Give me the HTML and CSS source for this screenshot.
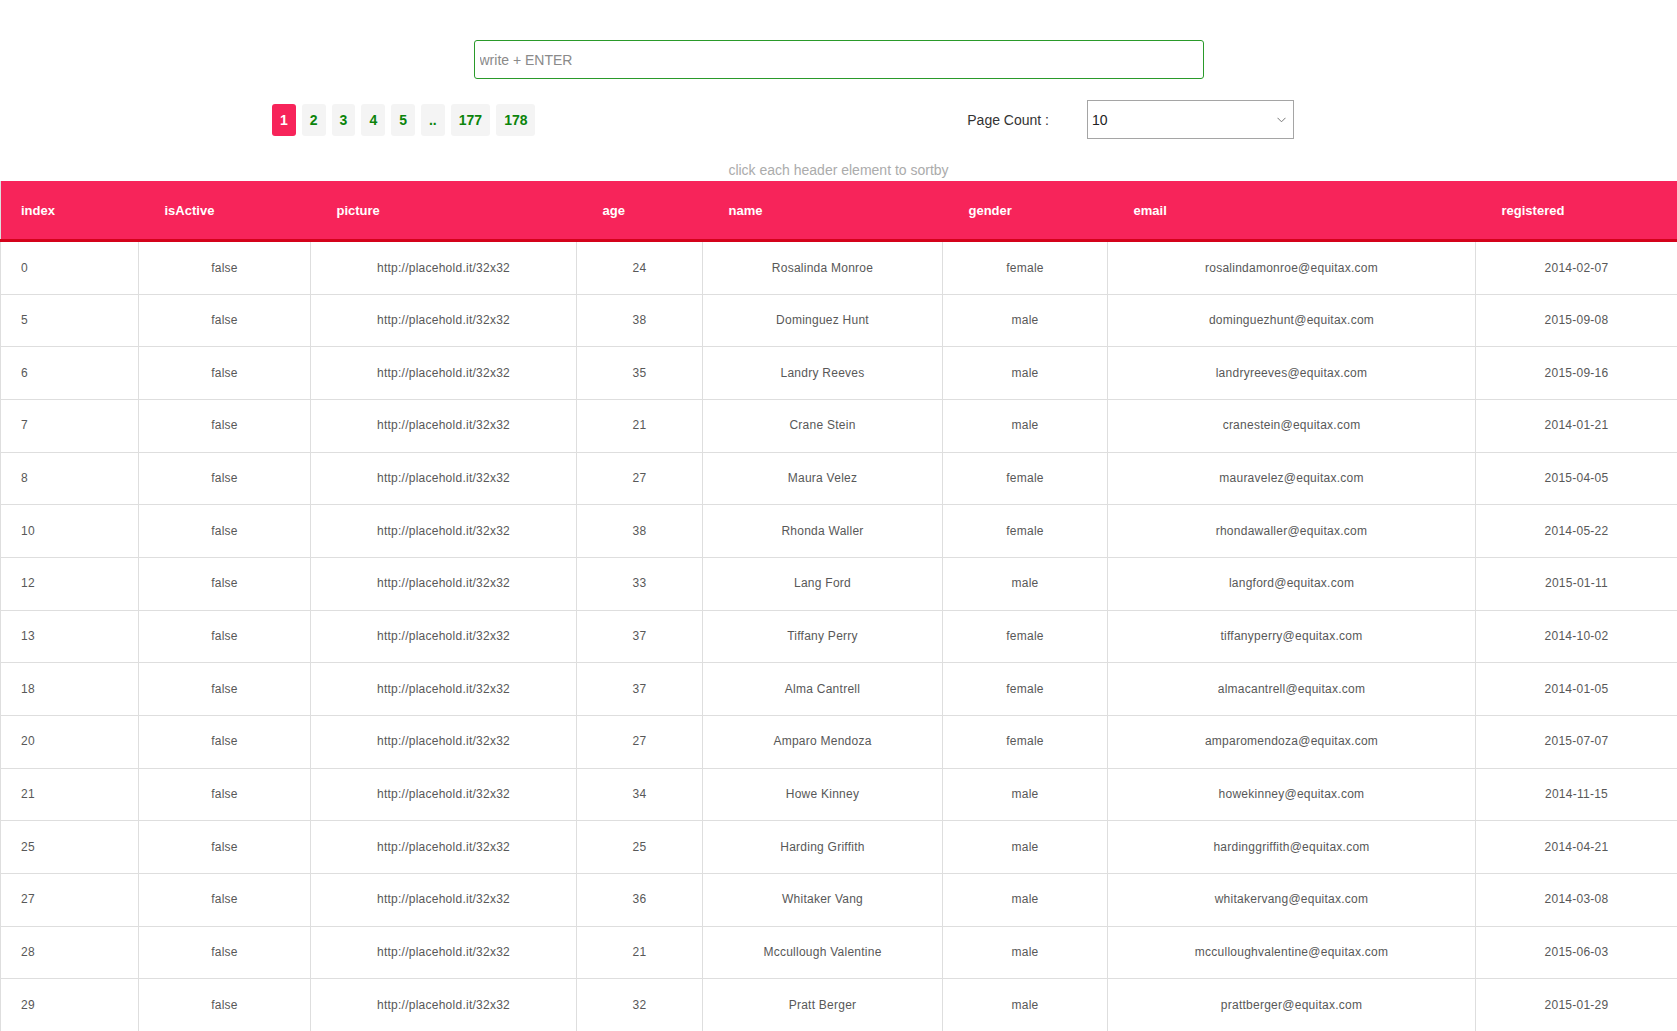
FILE: index.html
```html
<!DOCTYPE html>
<html lang="en">
<head>
<meta charset="utf-8">
<title>Table</title>
<link rel="stylesheet" href="styles.css">
</head>
<body>
<div class="search-wrap">
  <input class="search" type="text" placeholder="write + ENTER">
</div>
<div class="controls">
  <div class="pager">
    <span class="page active">1</span>
    <span class="page">2</span>
    <span class="page">3</span>
    <span class="page">4</span>
    <span class="page">5</span>
    <span class="page">..</span>
    <span class="page">177</span>
    <span class="page">178</span>
  </div>
  <div class="count">
    <span class="count-label">Page Count :</span>
    <div class="select-wrap">
      <select class="select"><option>10</option></select>
      <svg class="chev" width="9" height="6" viewBox="0 0 9 6"><path d="M0.5 0.8 L4.5 4.8 L8.5 0.8" fill="none" stroke="#777" stroke-width="1"/></svg>
    </div>
  </div>
</div>
<div class="hint">click each header element to sortby</div>
<table class="grid">
  <colgroup>
    <col class="c1"><col class="c2"><col class="c3"><col class="c4"><col class="c5"><col class="c6"><col class="c7"><col class="c8">
  </colgroup>
  <thead>
    <tr><th class="first">index</th><th>isActive</th><th>picture</th><th>age</th><th>name</th><th>gender</th><th>email</th><th>registered</th></tr>
  </thead>
  <tbody>
    <tr><td class="first">0</td><td>false</td><td>http://placehold.it/32x32</td><td>24</td><td>Rosalinda Monroe</td><td>female</td><td>rosalindamonroe@equitax.com</td><td>2014-02-07</td></tr>
    <tr><td class="first">5</td><td>false</td><td>http://placehold.it/32x32</td><td>38</td><td>Dominguez Hunt</td><td>male</td><td>dominguezhunt@equitax.com</td><td>2015-09-08</td></tr>
    <tr><td class="first">6</td><td>false</td><td>http://placehold.it/32x32</td><td>35</td><td>Landry Reeves</td><td>male</td><td>landryreeves@equitax.com</td><td>2015-09-16</td></tr>
    <tr><td class="first">7</td><td>false</td><td>http://placehold.it/32x32</td><td>21</td><td>Crane Stein</td><td>male</td><td>cranestein@equitax.com</td><td>2014-01-21</td></tr>
    <tr><td class="first">8</td><td>false</td><td>http://placehold.it/32x32</td><td>27</td><td>Maura Velez</td><td>female</td><td>mauravelez@equitax.com</td><td>2015-04-05</td></tr>
    <tr><td class="first">10</td><td>false</td><td>http://placehold.it/32x32</td><td>38</td><td>Rhonda Waller</td><td>female</td><td>rhondawaller@equitax.com</td><td>2014-05-22</td></tr>
    <tr><td class="first">12</td><td>false</td><td>http://placehold.it/32x32</td><td>33</td><td>Lang Ford</td><td>male</td><td>langford@equitax.com</td><td>2015-01-11</td></tr>
    <tr><td class="first">13</td><td>false</td><td>http://placehold.it/32x32</td><td>37</td><td>Tiffany Perry</td><td>female</td><td>tiffanyperry@equitax.com</td><td>2014-10-02</td></tr>
    <tr><td class="first">18</td><td>false</td><td>http://placehold.it/32x32</td><td>37</td><td>Alma Cantrell</td><td>female</td><td>almacantrell@equitax.com</td><td>2014-01-05</td></tr>
    <tr><td class="first">20</td><td>false</td><td>http://placehold.it/32x32</td><td>27</td><td>Amparo Mendoza</td><td>female</td><td>amparomendoza@equitax.com</td><td>2015-07-07</td></tr>
    <tr><td class="first">21</td><td>false</td><td>http://placehold.it/32x32</td><td>34</td><td>Howe Kinney</td><td>male</td><td>howekinney@equitax.com</td><td>2014-11-15</td></tr>
    <tr><td class="first">25</td><td>false</td><td>http://placehold.it/32x32</td><td>25</td><td>Harding Griffith</td><td>male</td><td>hardinggriffith@equitax.com</td><td>2014-04-21</td></tr>
    <tr><td class="first">27</td><td>false</td><td>http://placehold.it/32x32</td><td>36</td><td>Whitaker Vang</td><td>male</td><td>whitakervang@equitax.com</td><td>2014-03-08</td></tr>
    <tr><td class="first">28</td><td>false</td><td>http://placehold.it/32x32</td><td>21</td><td>Mccullough Valentine</td><td>male</td><td>mcculloughvalentine@equitax.com</td><td>2015-06-03</td></tr>
    <tr><td class="first">29</td><td>false</td><td>http://placehold.it/32x32</td><td>32</td><td>Pratt Berger</td><td>male</td><td>prattberger@equitax.com</td><td>2015-01-29</td></tr>
  </tbody>
</table>
</body>
</html>
```

FILE: styles.css
```css
html, body {
  margin: 0;
  padding: 0;
  background: #fff;
  font-family: "Liberation Sans", Arial, sans-serif;
}

.search-wrap {
  padding-top: 40px;
}

.search {
  display: block;
  box-sizing: border-box;
  width: 730px;
  height: 39px;
  margin: 0 auto;
  padding: 0 5px;
  border: 1px solid #2a9a2a;
  border-radius: 3px;
  font-family: "Liberation Sans", Arial, sans-serif;
  font-size: 14px;
  color: #333;
  outline: none;
}

.search::placeholder {
  color: #8a8a8a;
}

.controls {
  display: flex;
  justify-content: space-between;
  align-items: center;
  height: 39px;
  margin-top: 21px;
  padding: 0 383px 0 272px;
}

.pager {
  display: flex;
  gap: 6px;
}

.page {
  display: block;
  height: 32px;
  line-height: 32px;
  padding: 0 8px;
  border-radius: 3px;
  background: #f4f4f4;
  color: #0b840b;
  font-size: 14px;
  font-weight: bold;
}

.page.active {
  background: #f7245a;
  color: #fff;
}

.count {
  display: flex;
  align-items: center;
}

.count-label {
  font-size: 14px;
  color: #333;
  margin-right: 38px;
}

.select-wrap {
  position: relative;
}

.select {
  display: block;
  box-sizing: border-box;
  width: 207px;
  height: 39px;
  padding: 0 4px;
  border: 1px solid #a5a5a5;
  border-radius: 0;
  background: #fff;
  font-family: "Liberation Sans", Arial, sans-serif;
  font-size: 14px;
  color: #222;
  appearance: none;
  -webkit-appearance: none;
  outline: none;
}

.chev {
  position: absolute;
  right: 8px;
  top: 17px;
}

.hint {
  padding: 21px 0 1px;
  line-height: 20px;
  text-align: center;
  font-size: 14px;
  color: #ababab;
}

.grid {
  width: 100%;
  table-layout: fixed;
  border-collapse: collapse;
  border-left: 1px solid #ddd;
  border-right: 1px solid #ddd;
  border-bottom: 1px solid #ddd;
}

.c1 { width: 138px; }
.c2 { width: 172px; }
.c3 { width: 266px; }
.c4 { width: 126px; }
.c5 { width: 240px; }
.c6 { width: 165px; }
.c7 { width: 368px; }
.c8 { width: 202px; }

.grid th {
  height: 58px;
  padding: 0 0 0 26px;
  background: #f7245a;
  color: #fff;
  font-size: 13px;
  font-weight: bold;
  text-align: left;
  border-bottom: 3px solid #d4021b;
}

.grid th.first {
  padding-left: 20px;
}

.grid td {
  padding: 16.5px 0 15.5px;
  line-height: 19.65px;
  border: 1px solid #dedede;
  text-align: center;
  font-size: 12px;
  letter-spacing: 0.25px;
  color: #585858;
}

.grid td.first {
  text-align: left;
  padding-left: 20px;
}
```
